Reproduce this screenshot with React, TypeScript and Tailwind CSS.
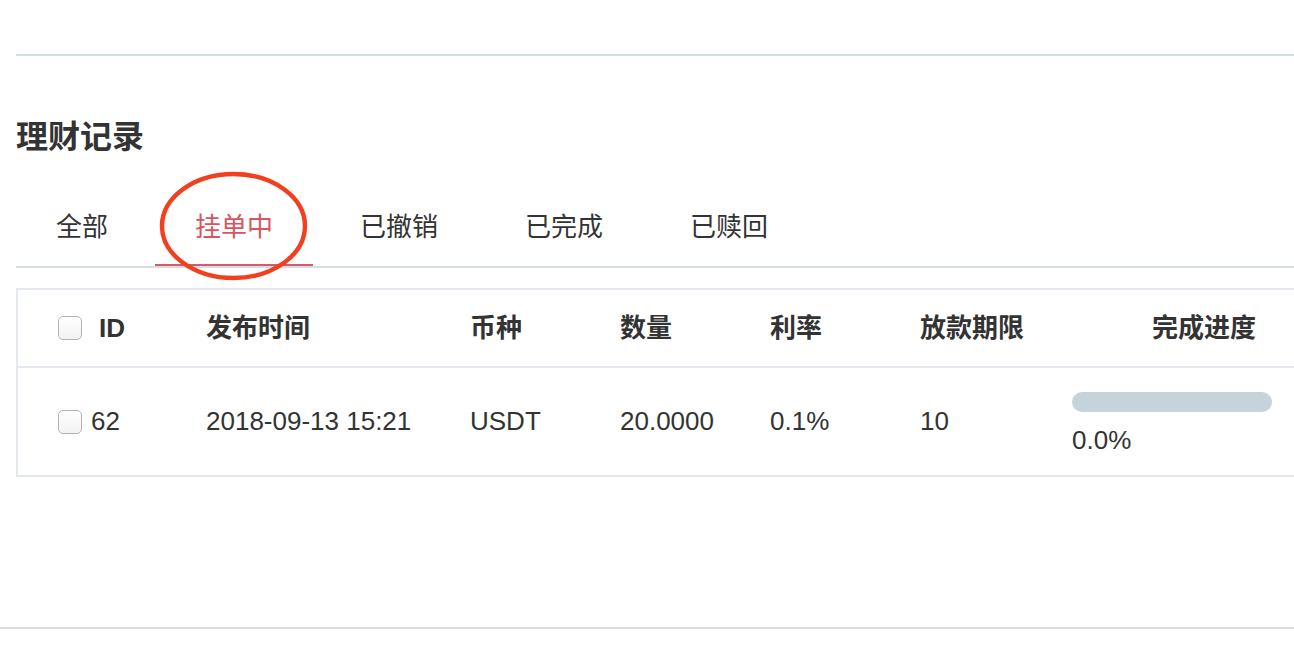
const tabs = ["全部", "挂单中", "已撤销", "已完成", "已赎回"];

const rows = [
  { id: 62, time: "2018-09-13 15:21", coin: "USDT", amount: "20.0000", rate: "0.1%", term: "10", progress: 0 },
];

const Checkbox = () => (
  <span className="inline-block h-[24px] w-[24px] shrink-0 rounded-[5px] border-[1.5px] border-[#b3b3b3] bg-gradient-to-b from-white to-[#f2f2f2]" />
);

const cols = "grid grid-cols-[188px_264px_150px_150px_150px_152px_1fr]";

export default function App() {
  return (
    <div className="relative min-h-screen bg-white pt-[54px] text-[#333] font-['Liberation_Sans','Noto_Sans_CJK_SC',sans-serif]">
      <div className="pl-4">
        <div className="border-t-2 border-[#d3dde2]" />

        <h2 className="mt-[65px] text-[32px] font-bold leading-[32px]">理财记录</h2>

        {/* Tabs */}
        <div className="mt-[61px] flex gap-[7px] border-b-2 border-[#d5dfe3]">
          {tabs.map((t, i) => (
            <div
              key={t}
              className={`px-[40px] pb-[24px] text-[26px] leading-[26px] border-b-2 ${
                i === 1 ? "border-[#d45b6a] text-[#d9545f]" : "border-transparent text-[#333]"
              }`}
            >
              {t}
            </div>
          ))}
        </div>

        {/* Table */}
        <div className="mt-[20px] border-2 border-r-0 border-[#e3e8ee]">
          <div className={`${cols} h-[78px] items-center border-b-2 border-[#e3e8ee] text-[26px] font-bold`}>
            <div className="flex items-center gap-[17px] pl-[40px]">
              <Checkbox />
              <span>ID</span>
            </div>
            <div>发布时间</div>
            <div>币种</div>
            <div>数量</div>
            <div>利率</div>
            <div>放款期限</div>
            <div className="pl-[80px]">完成进度</div>
          </div>

          {rows.map((r) => (
            <div key={r.id} className={`${cols} h-[107px] items-center text-[26px]`}>
              <div className="flex items-center gap-[9px] pl-[40px]">
                <Checkbox />
                <span>{r.id}</span>
              </div>
              <div>{r.time}</div>
              <div>{r.coin}</div>
              <div>{r.amount}</div>
              <div>{r.rate}</div>
              <div>{r.term}</div>
              <div className="flex flex-col gap-[13px] pt-[4px]">
                <div className="h-[20px] w-[200px] overflow-hidden rounded-full bg-[#c5d3db]">
                  <div className="h-full bg-[#d9545f]" style={{ width: `${r.progress}%` }} />
                </div>
                <span className="leading-[30px]">{r.progress.toFixed(1)}%</span>
              </div>
            </div>
          ))}
        </div>
      </div>

      <div className="mt-[150px] border-t-2 border-[#dcdcdc]" />

      {/* red annotation circle */}
      <svg className="absolute left-[158px] top-[169px]" width="152" height="115" viewBox="0 0 152 115">
        <ellipse cx="75.5" cy="57" rx="71.5" ry="52" fill="none" stroke="#f2401f" strokeWidth="4.5" />
      </svg>
    </div>
  );
}
